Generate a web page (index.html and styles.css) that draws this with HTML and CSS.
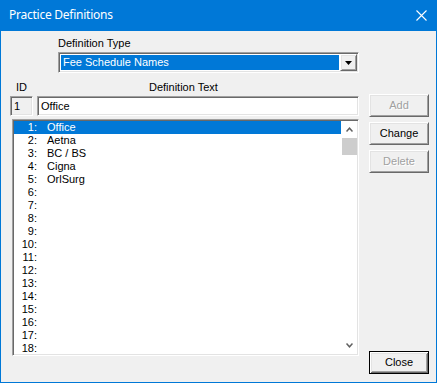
FILE: index.html
```html
<!DOCTYPE html>
<html>
<head>
<meta charset="utf-8">
<link rel="stylesheet" href="styles.css">
</head>
<body>
<div class="window">
  <div class="titlebar">
    <span class="title">Practice Definitions</span>
    <svg class="close-x" width="11" height="11" viewBox="0 0 11 11"><path d="M0.5 0.5 L10.5 10.5 M10.5 0.5 L0.5 10.5" stroke="#fff" stroke-width="1.1" fill="none"/></svg>
  </div>
  <div class="body">
    <div class="left">
      <div class="label type-label">Definition Type</div>
      <div class="combo sunken">
        <div class="combo-value">Fee Schedule Names</div>
        <div class="combo-btn raised"><svg width="7" height="4" viewBox="0 0 7 4"><path d="M0 0 H7 L3.5 4 Z" fill="#000"/></svg></div>
      </div>
      <div class="field-labels">
        <span class="label id-label">ID</span>
        <span class="label text-label">Definition Text</span>
      </div>
      <div class="fields">
        <div class="id-box sunken">1</div>
        <div class="text-input sunken">Office</div>
      </div>
      <div class="list sunken">
        <div class="rows">
          <div class="row selected"><span class="num">1:</span><span>Office</span></div>
          <div class="row"><span class="num">2:</span><span>Aetna</span></div>
          <div class="row"><span class="num">3:</span><span>BC / BS</span></div>
          <div class="row"><span class="num">4:</span><span>Cigna</span></div>
          <div class="row"><span class="num">5:</span><span>OrlSurg</span></div>
          <div class="row"><span class="num">6:</span><span></span></div>
          <div class="row"><span class="num">7:</span><span></span></div>
          <div class="row"><span class="num">8:</span><span></span></div>
          <div class="row"><span class="num">9:</span><span></span></div>
          <div class="row"><span class="num">10:</span><span></span></div>
          <div class="row"><span class="num">11:</span><span></span></div>
          <div class="row"><span class="num">12:</span><span></span></div>
          <div class="row"><span class="num">13:</span><span></span></div>
          <div class="row"><span class="num">14:</span><span></span></div>
          <div class="row"><span class="num">15:</span><span></span></div>
          <div class="row"><span class="num">16:</span><span></span></div>
          <div class="row"><span class="num">17:</span><span></span></div>
          <div class="row"><span class="num">18:</span><span></span></div>
        </div>
        <div class="scrollbar">
          <div class="arrow"><svg width="7" height="5" viewBox="0 0 7 5"><path d="M0.5 4.5 L3.5 1.2 L6.5 4.5" stroke="#606060" stroke-width="1.5" fill="none"/></svg></div>
          <div class="thumb"></div>
          <div class="track"></div>
          <div class="arrow"><svg width="7" height="5" viewBox="0 0 7 5"><path d="M0.5 0.5 L3.5 3.8 L6.5 0.5" stroke="#606060" stroke-width="1.5" fill="none"/></svg></div>
        </div>
      </div>
    </div>
    <div class="right">
      <div class="btn raised disabled add">Add</div>
      <div class="btn raised">Change</div>
      <div class="btn raised disabled">Delete</div>
      <div class="btn default close">Close</div>
    </div>
  </div>
</div>
</body>
</html>
```

FILE: styles.css
```css
html, body {
  margin: 0;
  padding: 0;
}
body {
  width: 437px;
  height: 383px;
  overflow: hidden;
  font-family: "Liberation Sans", Arial, sans-serif;
  font-size: 11px;
  color: #000;
}
.window {
  width: 437px;
  height: 383px;
  box-sizing: border-box;
  background: #0078d7;
  display: flex;
  flex-direction: column;
}
.titlebar {
  height: 31px;
  box-sizing: border-box;
  padding: 7px 10px 0 9px;
  display: flex;
  justify-content: space-between;
  align-items: flex-start;
  color: #fff;
}
.title {
  font-family: "Noto Sans", "Open Sans", sans-serif;
  font-size: 12px;
  line-height: 16px;
  letter-spacing: -0.25px;
}
.close-x {
  margin-top: 3px;
  display: block;
}
.body {
  flex: 1;
  margin: 0 1px 1px 1px;
  background: #f0f0f0;
  display: flex;
  gap: 10px;
  padding: 6px 7px 8px 9px;
  box-sizing: border-box;
}
.left {
  width: 349px;
  display: flex;
  flex-direction: column;
}
.label {
  line-height: 13px;
  white-space: nowrap;
}
.type-label {
  margin-left: 48px;
}
.sunken {
  box-sizing: border-box;
  border: 1px solid;
  border-color: #a0a0a0 #ffffff #ffffff #a0a0a0;
  box-shadow: inset 1px 1px #696969, inset -1px -1px #e3e3e3;
}
.raised {
  box-sizing: border-box;
  border: 1px solid;
  border-color: #ffffff #696969 #696969 #ffffff;
  box-shadow: inset 1px 1px #e3e3e3, inset -1px -1px #a0a0a0;
  background: #f0f0f0;
}
.combo {
  margin-top: 2px;
  margin-left: 48px;
  width: 301px;
  height: 21px;
  background: #fff;
  padding: 1px;
  display: flex;
}
.combo-value {
  flex: 1;
  margin: 1px;
  background: #0078d7;
  color: #fff;
  line-height: 15px;
  padding-left: 2px;
}
.combo-btn {
  width: 17px;
  height: 17px;
  display: flex;
  align-items: center;
  justify-content: center;
}
.combo-btn svg {
  display: block;
  margin-top: 1px;
}
.field-labels {
  margin-top: 8px;
  display: flex;
}
.id-label {
  margin-left: 6px;
}
.text-label {
  margin-left: 122px;
}
.fields {
  margin-top: 2px;
  display: flex;
  gap: 4px;
}
.id-box {
  width: 23px;
  height: 20px;
  background: #f0f0f0;
  padding: 1px 0 0 3px;
  line-height: 16px;
}
.text-input {
  flex: 1;
  height: 20px;
  background: #fff;
  padding: 1px 0 0 3px;
  line-height: 16px;
}
.list {
  margin-top: 3px;
  margin-left: 2px;
  width: 347px;
  height: 237px;
  background: #fff;
  padding: 1px;
  display: flex;
  overflow: hidden;
}
.rows {
  flex: 1;
  overflow: hidden;
}
.row {
  display: grid;
  grid-template-columns: 23px 1fr;
  column-gap: 10px;
  line-height: 13px;
  height: 13px;
  white-space: nowrap;
}
.row .num {
  text-align: right;
}
.row.selected {
  background: #0078d7;
  color: #fff;
}
.scrollbar {
  width: 16px;
  display: flex;
  flex-direction: column;
  background: #fff;
}
.arrow {
  height: 17px;
  display: flex;
  align-items: center;
  justify-content: center;
}
.arrow svg {
  display: block;
}
.thumb {
  height: 17px;
  margin: 0 0 0 1px;
  background: #cdcdcd;
}
.track {
  flex: 1;
}
.right {
  width: 60px;
  display: flex;
  flex-direction: column;
  gap: 5px;
}
.btn {
  height: 23px;
  display: flex;
  align-items: center;
  justify-content: center;
  line-height: 13px;
}
.btn.add {
  margin-top: 57px;
}
.btn.disabled {
  color: #a0a0a0;
  text-shadow: 1px 1px #ffffff;
}
.btn.default {
  box-sizing: border-box;
  border: 1px solid #000;
  background: #f0f0f0;
  box-shadow: inset 1px 1px #ffffff, inset -1px -1px #696969, inset 2px 2px #e3e3e3, inset -2px -2px #a0a0a0;
}
.btn.close {
  margin-top: auto;
}
```
